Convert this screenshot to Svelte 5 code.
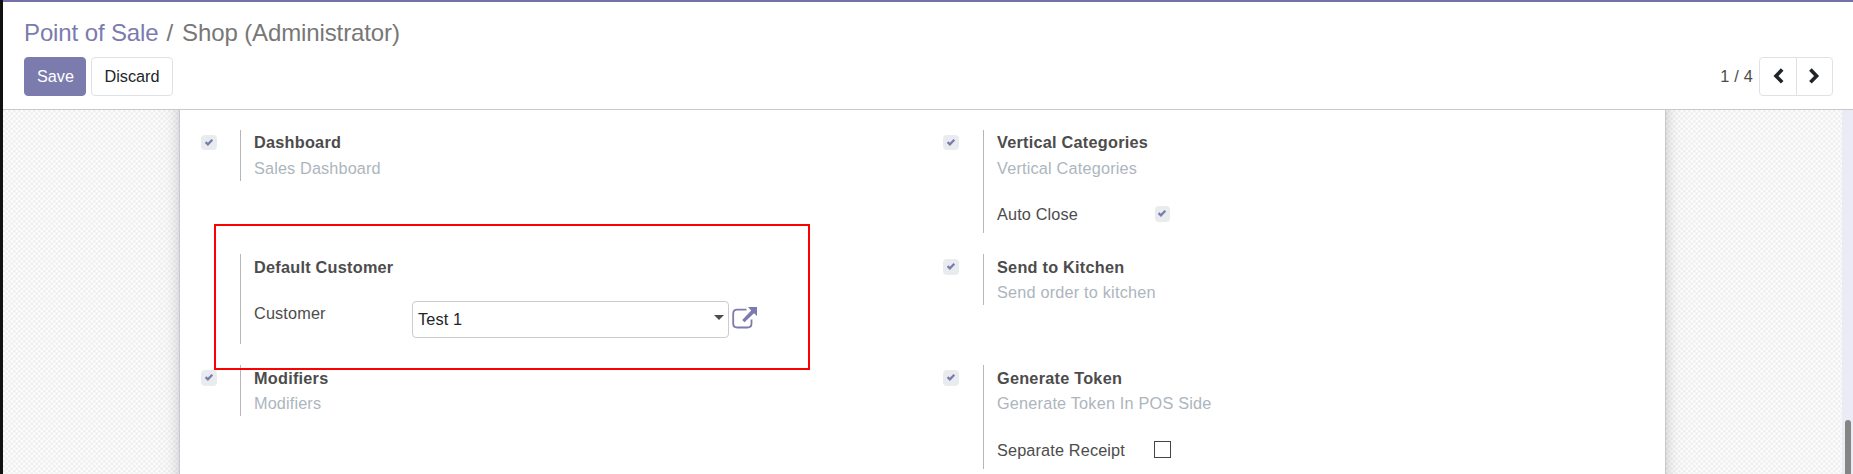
<script>
  const left = [
    { title: 'Dashboard', text: 'Sales Dashboard', checked: true },
    { title: 'Default Customer', select: { label: 'Customer', value: 'Test 1' } },
    { title: 'Modifiers', text: 'Modifiers', checked: true }
  ];
  const right = [
    { title: 'Vertical Categories', text: 'Vertical Categories', checked: true, option: { label: 'Auto Close', checked: true } },
    { title: 'Send to Kitchen', text: 'Send order to kitchen', checked: true },
    { title: 'Generate Token', text: 'Generate Token In POS Side', checked: true, option: { label: 'Separate Receipt', checked: false } }
  ];
</script>

{#snippet check()}
  <span class="check">
    <svg viewBox="0 0 16 16" width="16" height="16"><path d="M4.6 7.2 6.9 9.3 11.3 4.8" fill="none" stroke="#7c7bad" stroke-width="2.3" /></svg>
  </span>
{/snippet}

{#snippet setting(s)}
  <section class="setting">
    <div class="side">{#if s.checked}{@render check()}{/if}</div>
    <div class="pane">
      <div class="title">{s.title}</div>
      {#if s.text}<div class="muted">{s.text}</div>{/if}
      {#if s.option}
        <div class="option" class:unchecked={!s.option.checked}>
          <span class="label">{s.option.label}</span>
          {#if s.option.checked}{@render check()}{:else}<span class="empty"></span>{/if}
        </div>
      {/if}
      {#if s.select}
        <div class="field">
          <span class="label">{s.select.label}</span>
          <div class="input"><span>{s.select.value}</span><i class="caret"></i></div>
          <svg class="external" viewBox="0 0 26 22" width="26" height="22">
            <path d="M14.5 2.7H5.2Q1.2 2.7 1.2 6.7V16.5Q1.2 20.5 5.2 20.5H15.5Q19.5 20.5 19.5 16.5V12.5" fill="none" stroke="#7c7bad" stroke-width="1.8" />
            <path d="M16 0H25V9L22 6.2 12.5 15.2 10.2 13 19.2 3.5Z" fill="#7c7bad" />
          </svg>
        </div>
      {/if}
    </div>
  </section>
{/snippet}

<div class="app">
  <header>
    <div class="crumbs"><span class="link">Point of Sale</span><span class="slash">/</span><span class="current">Shop (Administrator)</span></div>
    <div class="bar">
      <div class="actions"><button class="save">Save</button><button>Discard</button></div>
      <div class="pager">
        <span>1 / 4</span>
        <div class="arrows">
          <button aria-label="Previous"><svg viewBox="0 0 12 16" width="12" height="16"><path d="M10.2 1.6 4 8 10.2 14.2" fill="none" stroke="#212529" stroke-width="3.6" /></svg></button>
          <button aria-label="Next"><svg viewBox="0 0 12 16" width="12" height="16"><path d="M1.4 1.6 7.6 8 1.4 14.2" fill="none" stroke="#212529" stroke-width="3.6" /></svg></button>
        </div>
      </div>
    </div>
  </header>
  <div class="content">
    <main>
      <div class="sheet">
        <div class="column">{#each left as s}{@render setting(s)}{/each}</div>
        <div class="column">{#each right as s}{@render setting(s)}{/each}</div>
      </div>
    </main>
    <div class="track"><div class="thumb"></div></div>
  </div>
  <div class="highlight"></div>
</div>

<style>
  :global(body) { margin: 0; overflow: hidden; }
  .app {
    position: relative; box-sizing: border-box; width: 1853px; height: 474px; overflow: hidden;
    display: flex; flex-direction: column; border-left: 3px solid #111; background: #fff;
    font: 16.25px/24px "Liberation Sans", Arial, sans-serif; color: #4c4c4c;
  }
  header { box-sizing: border-box; height: 110px; flex: none; border-top: 2px solid #7370a8; border-bottom: 1px solid #c8c8cd; padding: 13px 20px 0 21px; }
  .crumbs { display: flex; font-size: 24px; letter-spacing: -0.12px; line-height: 36px; height: 42px; white-space: pre; color: #777; }
  .link { color: #7c7bad; }
  .slash { padding: 0 9px 0 8px; }
  .bar { display: flex; justify-content: space-between; }
  .actions { display: flex; gap: 5px; }
  button { box-sizing: border-box; height: 39px; border: 1px solid #dee2e6; border-radius: 4px; background: #fff; color: #212529; font: inherit; padding: 0 0 2px; width: 82px; }
  .save { width: 62px; padding-left: 1px; background: #7c7bad; border-color: #7c7bad; color: #fff; }
  .pager { display: flex; align-items: center; gap: 6px; }
  .pager > span { padding-bottom: 2px; letter-spacing: 0.25px; }
  .arrows { display: flex; }
  .arrows button { width: 38px; display: flex; align-items: center; justify-content: center; }
  .arrows button:first-child { border-radius: 4px 0 0 4px; }
  .arrows button:last-child { width: 37px; margin-left: -1px; border-radius: 0 4px 4px 0; }
  .content { display: flex; flex: 1; min-height: 0; }
  main {
    flex: 1; overflow: hidden; padding: 0 176px;
    background:
      radial-gradient(circle at 1.25px 1.25px, #eee 0.7px, transparent 2px) 0 0 / 5px 5px,
      radial-gradient(circle at 3.75px 3.75px, #eee 0.7px, transparent 2px) 0 0 / 5px 5px,
      #fcfcfc;
  }
  .sheet {
    box-sizing: border-box; height: 480px; margin-top: -60px; padding: 80px 0 0 21px; display: grid; grid-template-columns: 742px 1fr;
    background: #fff; border: 1px solid #c8c8d3; border-top: 0; box-shadow: 0 6px 25px -16px #000;
  }
  .column { display: grid; grid-template-rows: 124px 111px 110px; align-content: start; align-items: start; letter-spacing: 0.2px; }
  .column:first-child { letter-spacing: 0.14px; }
  .setting { display: flex; }
  .side { width: 39px; padding-top: 5px; }
  .column:last-child .side { width: 40px; }
  .check { display: block; box-sizing: border-box; width: 16px; height: 16px; border-radius: 4px; background: #e9ecef; }
  .setting:first-child .check { height: 15px; }
  .check svg { display: block; }
  .pane { border-left: 1px solid #b7b7b7; padding-left: 13px; min-height: 51px; }
  .title { font-weight: 700; height: 26px; letter-spacing: 0.25px; }
  .setting:not(:first-child) .title { padding-top: 1px; height: 25px; }
  .muted { color: #adb5bd; height: 25px; }
  .option { display: flex; height: 52px; box-sizing: border-box; padding-top: 22px; }
  .option .label { width: 158px; margin-top: -1px; letter-spacing: 0.15px; }
  .option.unchecked { height: 53px; }
  .option.unchecked .label { margin-top: 0; }
  .setting .option .check { margin-top: 3px; height: 16px; width: 15px; }
  .option .check svg { margin-left: -1px; }
  .empty { box-sizing: border-box; width: 17px; height: 17px; border: 1px solid #444; margin: 3px 0 0 -1px; }
  .field { display: flex; height: 64px; box-sizing: border-box; padding-top: 21px; }
  .field .label { width: 158px; letter-spacing: 0.15px; }
  .input { box-sizing: border-box; width: 317px; height: 37px; border: 1px solid #ccc; border-radius: 4px; padding: 0 4px 2px 5px; display: flex; align-items: center; justify-content: space-between; color: #212529; }
  .caret { border: 5px solid transparent; border-top-color: #4c4c4c; border-bottom: 0; margin-top: -2px; }
  .external { margin: 6px 0 0 3px; }
  .track { width: 11px; background: #e9ecf5; padding: 310px 0 0 3px; box-sizing: border-box; }
  .thumb { width: 6px; height: 80px; border-radius: 3px; background: #858585; }
  .highlight { position: absolute; left: 211px; top: 224px; width: 592px; height: 142px; border: 2px solid #f00; }
</style>
